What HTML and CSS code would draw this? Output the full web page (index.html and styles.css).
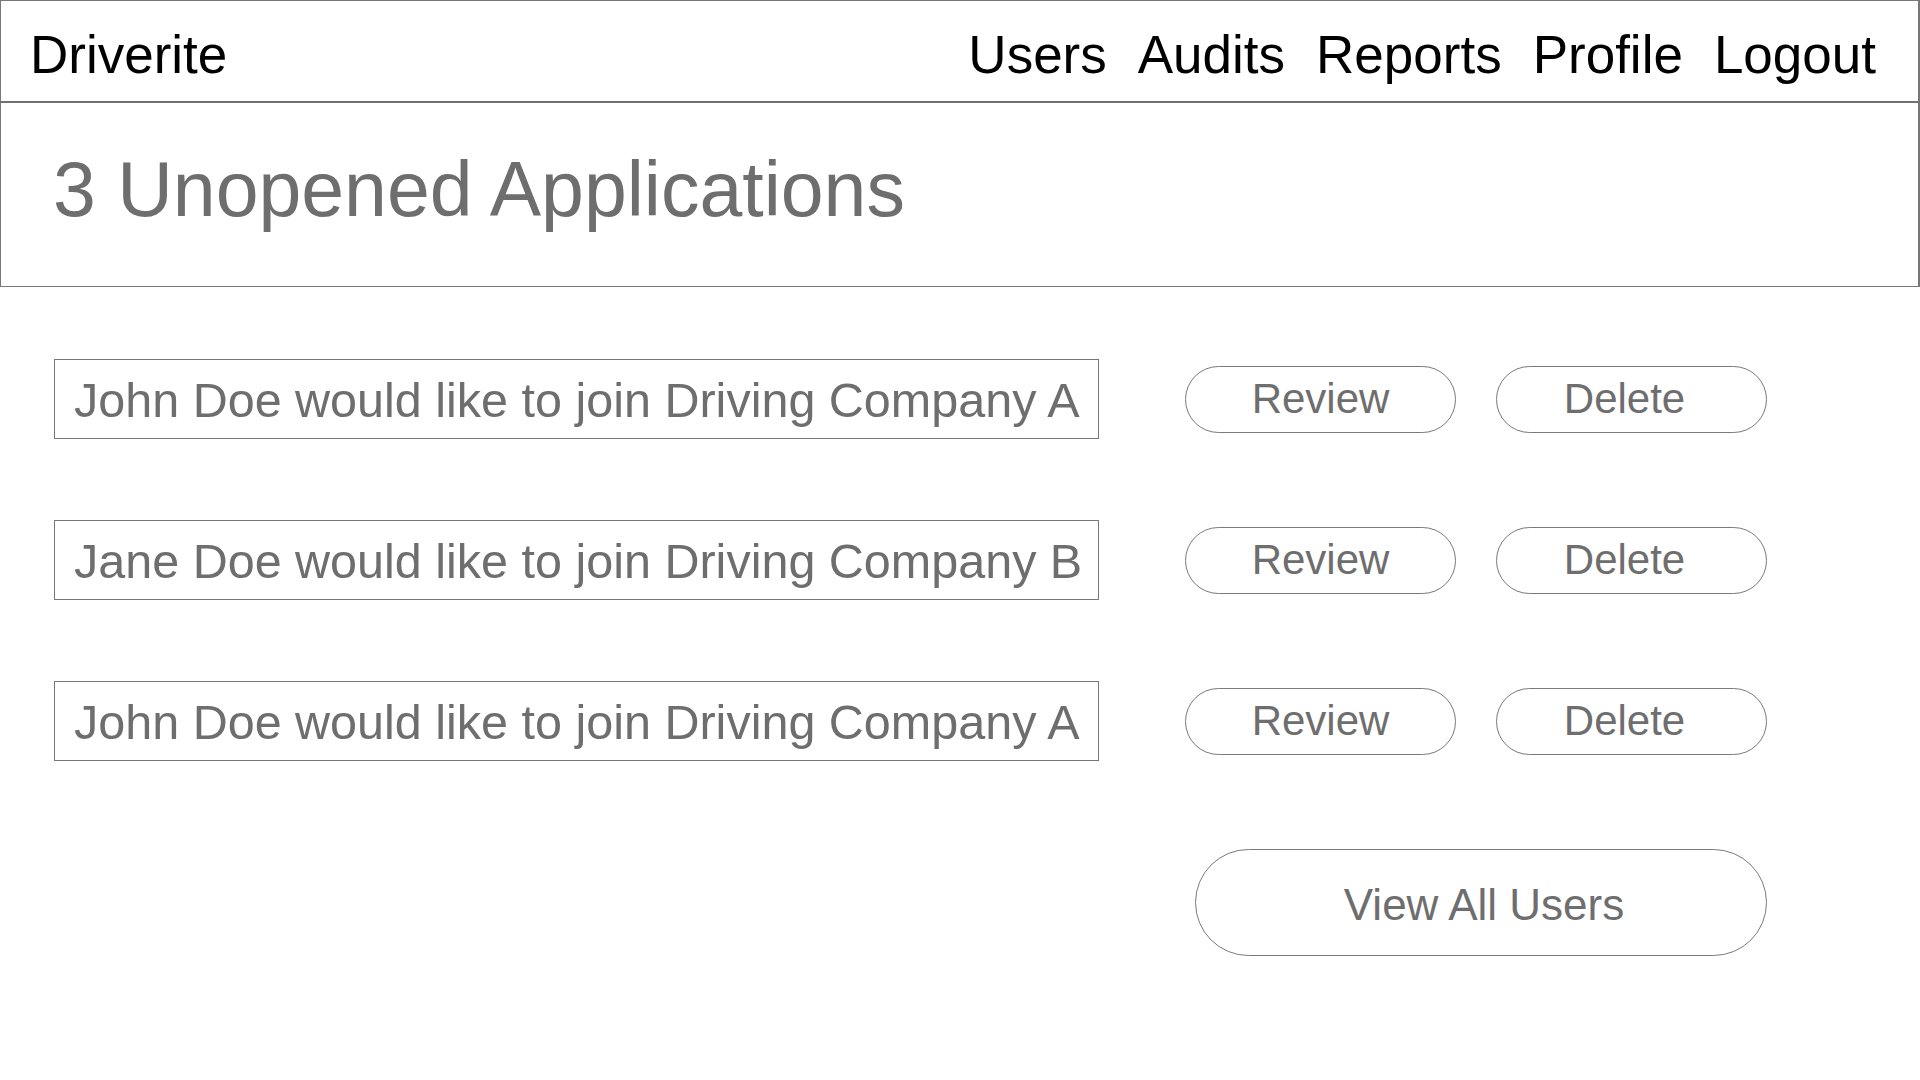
FILE: index.html
```
<!DOCTYPE html>
<html lang="en">
<head>
<meta charset="utf-8">
<title>Driverite</title>
<link rel="stylesheet" href="styles.css">
</head>
<body>
<header class="topbar">
  <div class="brand">Driverite</div>
  <nav class="nav">
    <a class="nav-link">Users</a>
    <a class="nav-link">Audits</a>
    <a class="nav-link">Reports</a>
    <a class="nav-link">Profile</a>
    <a class="nav-link">Logout</a>
  </nav>
</header>
<section class="title-box">
  <h1 class="title">3 Unopened Applications</h1>
</section>
<main class="content">
  <div class="row">
    <div class="app-box">John Doe would like to join Driving Company A</div>
    <div class="actions">
      <button class="pill">Review</button>
      <button class="pill pill-delete">Delete</button>
    </div>
  </div>
  <div class="row">
    <div class="app-box">Jane Doe would like to join Driving Company B</div>
    <div class="actions">
      <button class="pill">Review</button>
      <button class="pill pill-delete">Delete</button>
    </div>
  </div>
  <div class="row">
    <div class="app-box">John Doe would like to join Driving Company A</div>
    <div class="actions">
      <button class="pill">Review</button>
      <button class="pill pill-delete">Delete</button>
    </div>
  </div>
  <div class="footer-row">
    <button class="pill pill-large">View All Users</button>
  </div>
</main>
</body>
</html>
```

FILE: styles.css
```
html, body {
  margin: 0;
  padding: 0;
  background: #ffffff;
}

body {
  font-family: "Liberation Sans", Arial, Helvetica, sans-serif;
  color: #6e6e6e;
  width: 1920px;
}

.topbar {
  display: flex;
  justify-content: space-between;
  align-items: flex-start;
  border-top: 1px solid #777777;
  border-left: 1px solid #777777;
  border-right: 2px solid #777777;
  border-bottom: 2px solid #707070;
  padding: 7px 42px 0 29px;
  height: 93px;
  line-height: 93px;
  font-size: 53px;
  color: #000000;
  box-sizing: content-box;
}

.brand {
  white-space: nowrap;
}

.nav {
  display: flex;
  gap: 31px;
}

.nav-link {
  color: #000000;
  text-decoration: none;
  white-space: nowrap;
}

.title-box {
  border-left: 1px solid #777777;
  border-right: 2px solid #777777;
  border-bottom: 1px solid #777777;
  padding: 44px 0 55px 52px;
}

.title {
  margin: 0;
  font-weight: normal;
  font-size: 77px;
  line-height: 84px;
  color: #6e6e6e;
  white-space: nowrap;
}

.content {
  width: 1713px;
  padding: 72px 0 0 54px;
  display: flex;
  flex-direction: column;
  gap: 81px;
}

.row {
  display: flex;
  align-items: center;
}

.app-box {
  width: 1047px;
  box-sizing: border-box;
  border: 1px solid #777777;
  padding: 3px 0 0 19px;
  height: 80px;
  line-height: 75px;
  font-size: 48.5px;
  color: #6e6e6e;
  white-space: nowrap;
}

.actions {
  display: flex;
  gap: 40px;
  margin-left: 86px;
}

.pill {
  font-family: "Liberation Sans", Arial, Helvetica, sans-serif;
  width: 271px;
  height: 67px;
  box-sizing: border-box;
  border: 1px solid #7a7a7a;
  border-radius: 999px;
  background: #ffffff;
  color: #6e6e6e;
  font-size: 42px;
  line-height: 1;
  padding: 0;
  text-align: center;
}

.pill-delete {
  padding-right: 14px;
}

.footer-row {
  display: flex;
  justify-content: flex-end;
  margin-top: 7px;
}

.pill-large {
  width: 572px;
  height: 107px;
  font-size: 44px;
  padding: 4px 0 0 6px;
}
```
